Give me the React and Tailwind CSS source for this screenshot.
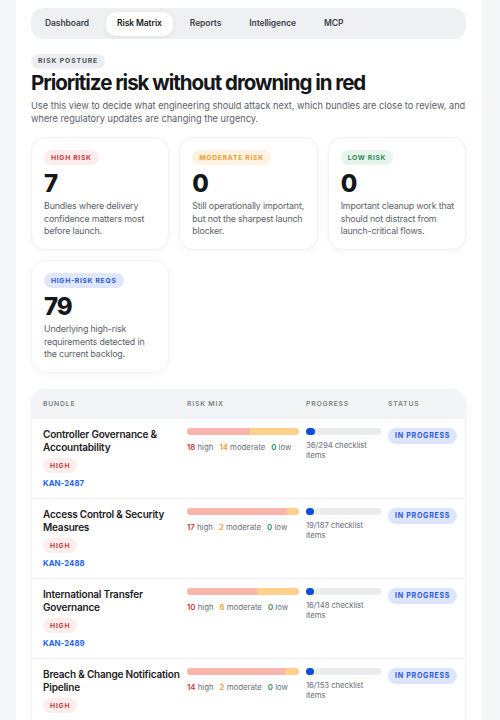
import React from 'react';

const tabs = ['Dashboard', 'Risk Matrix', 'Reports', 'Intelligence', 'MCP'];

const summary = [
  { label: 'High risk', value: 7, tone: 'bg-[#fdeded] text-[#c8383a]', text: 'Bundles where delivery confidence matters most before launch.' },
  { label: 'Moderate risk', value: 0, tone: 'bg-[#fef3e3] text-[#f29b2b]', text: 'Still operationally important, but not the sharpest launch blocker.' },
  { label: 'Low risk', value: 0, tone: 'bg-[#e6f5ec] text-[#2f8a5a]', text: 'Important cleanup work that should not distract from launch-critical flows.' },
  { label: 'High-risk reqs', value: 79, tone: 'bg-[#dfe6fd] text-[#2757d6]', text: 'Underlying high-risk requirements detected in the current backlog.' },
];

const bundles = [
  { name: 'Controller Governance & Accountability', key: 'KAN-2487', high: 18, moderate: 14, low: 0, done: 36, total: 294 },
  { name: 'Access Control & Security Measures', key: 'KAN-2488', high: 17, moderate: 2, low: 0, done: 19, total: 187 },
  { name: 'International Transfer Governance', key: 'KAN-2489', high: 10, moderate: 6, low: 0, done: 16, total: 148 },
  { name: 'Breach & Change Notification Pipeline', key: 'KAN-2490', high: 14, moderate: 2, low: 0, done: 16, total: 153 },
];

function SummaryCard({ item }) {
  return (
    <div className="h-[113px] rounded-[14px] border border-[#f1f2f4] bg-white pl-3 pr-[9px] pt-[12px] shadow-[0_2px_8px_rgba(15,23,42,0.04)]">
      <span className={`flex h-[15px] w-fit items-center whitespace-nowrap rounded-full px-[7px] text-[6.8px] font-bold uppercase tracking-[0.1em] ${item.tone}`}>
        {item.label}
      </span>
      <div className="mt-[5px] text-[24px] font-extrabold leading-[28px] tracking-[-0.05em] text-[#15171a]">{item.value}</div>
      <p className="mt-[2px] text-[8.9px] leading-[12.5px] tracking-[-0.02em] text-[#5d626a]">{item.text}</p>
    </div>
  );
}

function BundleRow({ row }) {
  const sum = row.high + row.moderate + row.low;
  const pct = Math.max((row.done / row.total) * 100, 11);
  return (
    <div className="grid h-[80px] grid-cols-[137px_112px_75px_1fr] gap-x-[7px] border-t border-[#f0f1f3] px-[11px] pt-[9px]">
      <div>
        <div className="text-[10px] font-semibold leading-[13px] tracking-[-0.02em] text-[#1d2024]">{row.name}</div>
        <span className="mt-[4px] flex h-[15px] w-fit items-center rounded-full bg-[#fdeded] px-[7px] text-[6.8px] font-bold tracking-[0.12em] text-[#c8383a]">
          HIGH
        </span>
        <div className="mt-[4px] text-[7.8px] font-bold leading-[12px] tracking-[0.01em] text-[#2563eb]">{row.key}</div>
      </div>
      <div>
        <div className="flex h-[7px] overflow-hidden rounded-full bg-[#ececee]">
          <div className="h-full bg-[#f7b5ad]" style={{ width: `${(row.high / sum) * 100}%` }} />
          <div className="h-full bg-[#fdd08b]" style={{ width: `${(row.moderate / sum) * 100}%` }} />
        </div>
        <div className="mt-[6px] flex gap-[6px] whitespace-nowrap text-[7.8px] leading-[12px] text-[#6b7079]">
          <span><b className="font-semibold text-[#c8383a]">{row.high}</b> high</span>
          <span><b className="font-semibold text-[#f29b2b]">{row.moderate}</b> moderate</span>
          <span><b className="font-semibold text-[#2f8a5a]">{row.low}</b> low</span>
        </div>
      </div>
      <div>
        <div className="h-[7px] rounded-full bg-[#ebecee]">
          <div className="h-full rounded-full bg-[#0b4fd8]" style={{ width: `${pct}%` }} />
        </div>
        <div className="mt-[5px] text-[7.8px] leading-[10px] tracking-[-0.01em] text-[#6b7079]">
          {`${row.done}/${row.total} checklist items`}
        </div>
      </div>
      <div>
        <span className="flex h-[16px] w-fit items-center whitespace-nowrap rounded-full bg-[#dde5fd] px-[7px] text-[7px] font-bold tracking-[0.11em] text-[#2757d6]">
          IN PROGRESS
        </span>
      </div>
    </div>
  );
}

export default function App() {
  return (
    <div className="min-h-screen bg-[#f6f7f9] pl-4 font-[Inter,sans-serif]">
      <div className="min-h-screen w-[465px] bg-white px-[15px] pt-2 pb-8">
        <nav className="flex h-[31px] items-center gap-1.5 rounded-[13px] bg-[#eff0f2] px-[3px]">
          {tabs.map((t) => (
            <button
              key={t}
              className={`h-6 rounded-[10px] px-[11px] text-[8.5px] font-semibold tracking-[-0.01em] ${
                t === 'Risk Matrix' ? 'bg-white text-[#16181b] shadow-[0_1px_4px_rgba(15,23,42,0.08)]' : 'text-[#3c4047]'
              }`}
            >
              {t}
            </button>
          ))}
        </nav>

        <span className="mt-[15px] flex h-[15px] w-fit items-center rounded-full bg-[#eceef1] px-[7px] text-[6.8px] font-bold tracking-[0.13em] text-[#4b5058]">
          RISK POSTURE
        </span>
        <h1 className="mt-[1px] text-[20.5px] font-bold leading-[26px] tracking-[-0.05em] text-[#15171a]">
          Prioritize risk without drowning in red
        </h1>
        <p className="mt-[4px] text-[9.2px] leading-[12.7px] text-[#5b6068]">
          Use this view to decide what engineering should attack next, which bundles are close to review, and where regulatory updates are changing the urgency.
        </p>

        <div className="mt-[12px] grid grid-cols-3 gap-[10px]">
          {summary.map((s) => (
            <SummaryCard key={s.label} item={s} />
          ))}
        </div>

        <div className="mt-4 overflow-hidden rounded-[14px] border border-[#f1f2f4] bg-white shadow-[0_2px_8px_rgba(15,23,42,0.04)]">
          <div className="grid h-[28px] grid-cols-[137px_112px_75px_1fr] items-center gap-x-[7px] bg-[#f3f4f6] px-[11px] text-[6.8px] font-semibold tracking-[0.12em] text-[#7a7f87]">
            <span>BUNDLE</span>
            <span>RISK MIX</span>
            <span>PROGRESS</span>
            <span>STATUS</span>
          </div>
          {bundles.map((b) => (
            <BundleRow key={b.key} row={b} />
          ))}
        </div>
      </div>
    </div>
  );
}
